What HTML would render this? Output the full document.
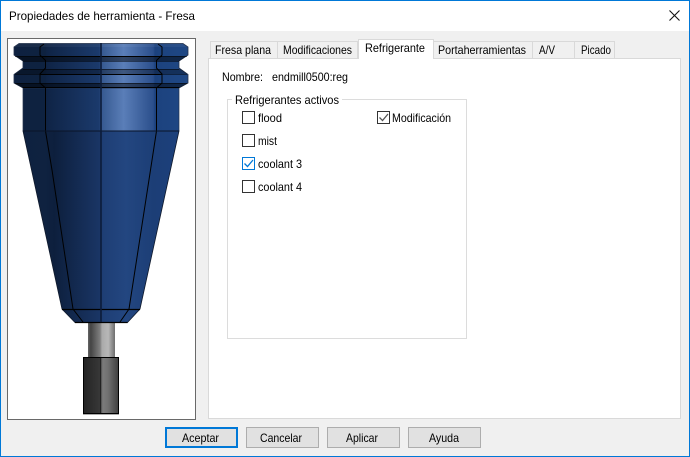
<!DOCTYPE html>
<html><head><meta charset="utf-8"><style>
html,body{margin:0;padding:0;width:690px;height:457px;overflow:hidden;background:#f0f0f0}
svg{display:block}
text{font-family:"Liberation Sans",sans-serif;font-size:12px;fill:#000}
.c{shape-rendering:crispEdges}
</style></head><body>
<svg width="690" height="457" viewBox="0 0 690 457" xmlns="http://www.w3.org/2000/svg">
<defs>
<linearGradient id="g1" gradientUnits="userSpaceOnUse" x1="14" x2="188" y1="0" y2="0">
<stop offset="0" stop-color="#0e2140"/><stop offset=".18" stop-color="#0e2240"/>
<stop offset=".19" stop-color="#0f2446"/><stop offset=".49" stop-color="#1b3a6c"/>
<stop offset=".5" stop-color="#35588f"/><stop offset=".63" stop-color="#5a7eb8"/>
<stop offset=".8" stop-color="#2b4f8c"/><stop offset=".81" stop-color="#1c427e"/>
<stop offset="1" stop-color="#1f4885"/></linearGradient>
<linearGradient id="g2" gradientUnits="userSpaceOnUse" x1="23" x2="179" y1="0" y2="0">
<stop offset="0" stop-color="#0e2140"/><stop offset=".14" stop-color="#0f2240"/>
<stop offset=".2" stop-color="#0d1f3d"/><stop offset=".5" stop-color="#1a3666"/>
<stop offset=".51" stop-color="#1e3e74"/><stop offset=".66" stop-color="#234680"/>
<stop offset=".84" stop-color="#1c3e76"/><stop offset="1" stop-color="#1c407c"/></linearGradient>
<linearGradient id="g3" gradientUnits="userSpaceOnUse" x1="88" x2="115" y1="0" y2="0">
<stop offset="0" stop-color="#666"/><stop offset=".1" stop-color="#444"/><stop offset=".45" stop-color="#808080"/>
<stop offset=".52" stop-color="#aaa"/><stop offset=".75" stop-color="#b8b8b8"/><stop offset="1" stop-color="#6e6e6e"/></linearGradient>
<linearGradient id="g4" gradientUnits="userSpaceOnUse" x1="83" x2="119" y1="0" y2="0">
<stop offset="0" stop-color="#222"/><stop offset=".48" stop-color="#383838"/>
<stop offset=".55" stop-color="#7c7c7c"/><stop offset=".7" stop-color="#707070"/><stop offset="1" stop-color="#3c3c3c"/></linearGradient>
<clipPath id="fl"><path d="M19 43.500H183L188 47V55L179 61V68L188 74.500V83L179 88H23L14 83V74.500L23 68V61L14 55V47Z"/></clipPath>
</defs>

<!-- window -->
<rect class="c" x="0" y="0" width="690" height="457" fill="#0078d7"/>
<rect class="c" x="1" y="1" width="688" height="455" fill="#f0f0f0"/>
<rect class="c" x="1" y="1" width="688" height="30" fill="#fff"/>
<text x="9" y="20" textLength="186" lengthAdjust="spacingAndGlyphs">Propiedades de herramienta - Fresa</text>
<path d="M669.500 10.500L679.500 20.500M679.500 10.500L669.500 20.500" stroke="#111" stroke-width="1.100" fill="none"/>

<!-- image panel -->
<rect class="c" x="7.500" y="38.500" width="188" height="381" fill="#fff" stroke="#696969"/>

<!-- shank -->
<rect x="88" y="322" width="27" height="35" fill="url(#g3)"/>
<rect x="83.500" y="357.500" width="35" height="56" fill="url(#g4)" stroke="#000"/>
<rect class="c" x="100" y="358" width="1" height="55" fill="#222"/>
<rect class="c" x="83" y="414" width="36" height="1" fill="#aaa"/>

<!-- body -->
<path d="M23 131H179L140 309L127.500 322.500H75L62 309Z" fill="url(#g2)" stroke="#101a2c" stroke-width=".8"/>
<rect x="23" y="88" width="156" height="43" fill="url(#g1)"/>
<path d="M23 88V131M179 88V131" stroke="#26344c" stroke-width=".7"/>
<path d="M19 43.500H183L188 47V55L179 61V68L188 74.500V83L179 88H23L14 83V74.500L23 68V61L14 55V47Z" fill="url(#g1)" stroke="#22304a" stroke-width=".8"/>
<g clip-path="url(#fl)">
<rect class="c" x="14" y="44" width="174" height="3" fill="#fff" opacity=".05"/>
<rect class="c" x="14" y="56" width="174" height="5" fill="#000" opacity=".45"/>
<rect class="c" x="14" y="69" width="174" height="5" fill="#000" opacity=".3"/>
<rect class="c" x="14" y="83" width="174" height="5" fill="#000" opacity=".45"/>
</g>

<!-- edges -->
<g fill="none" stroke="#000" stroke-width="1">
<path d="M15 56.500H187M23 61.500H179M23 69.500H179M15 74.500H187M15 83.500H187" stroke-opacity=".5"/>
<path d="M40 56.500H162M40 74.500H162M23 87.500H179" stroke-width="1.100"/>
<path d="M44 44L40 47V55L45.500 60.500V68L40 74V83L45.500 88V131L52 170L73 309L83 322"/>
<path d="M158 44L162 47V55L156.500 60.500V68L162 74V83L156.500 88V131L150.500 170L129 309L120 322"/>
<path d="M23 131H179" stroke="#0a1428"/>
<path d="M62 309.500H140" stroke-width="1.200"/>
<path d="M75 322.500H127.500" stroke-width="1.200"/>
<path d="M101 43V322" stroke="#0c1c3a" stroke-width="1.600"/>
</g>

<!-- tabs -->
<rect class="c" x="208.500" y="58.500" width="472" height="360" fill="#fff" stroke="#d9d9d9"/>
<g class="c" fill="#f0f0f0" stroke="#d9d9d9">
<rect x="210.500" y="41.500" width="67" height="17"/>
<rect x="277.500" y="41.500" width="80" height="17"/>
<rect x="433.500" y="41.500" width="99" height="17"/>
<rect x="532.500" y="41.500" width="42" height="17"/>
<rect x="574.500" y="41.500" width="40" height="17"/>
</g>
<path class="c" d="M358.500 59V39.500H433.500V59" fill="#fff" stroke="#d9d9d9"/>
<rect class="c" x="359" y="58" width="74" height="2" fill="#fff"/>
<text x="215" y="54" textLength="56" lengthAdjust="spacingAndGlyphs">Fresa plana</text>
<text x="283" y="54" textLength="69" lengthAdjust="spacingAndGlyphs">Modificaciones</text>
<text x="365" y="52" textLength="60" lengthAdjust="spacingAndGlyphs">Refrigerante</text>
<text x="438" y="54" textLength="88" lengthAdjust="spacingAndGlyphs">Portaherramientas</text>
<text x="539" y="54" textLength="16" lengthAdjust="spacingAndGlyphs">A/V</text>
<text x="581" y="54" textLength="30" lengthAdjust="spacingAndGlyphs">Picado</text>

<!-- name -->
<text x="222" y="81" textLength="41" lengthAdjust="spacingAndGlyphs">Nombre:</text>
<text x="272" y="81" textLength="76" lengthAdjust="spacingAndGlyphs">endmill0500:reg</text>

<!-- group -->
<rect class="c" x="227.500" y="99.500" width="239" height="239" fill="#fff" stroke="#dcdcdc"/>
<rect class="c" x="232" y="96" width="110" height="8" fill="#fff"/>
<text x="235" y="104" textLength="104" lengthAdjust="spacingAndGlyphs">Refrigerantes activos</text>

<!-- checkboxes -->
<g class="c" fill="#fff" stroke="#333">
<rect x="242.500" y="111.500" width="12" height="12"/>
<rect x="377.500" y="111.500" width="12" height="12"/>
<rect x="242.500" y="134.500" width="12" height="12"/>
<rect x="242.500" y="157.500" width="12" height="12" stroke="#0078d7"/>
<rect x="242.500" y="180.500" width="12" height="12"/>
</g>
<path d="M379.500 117.500L382.500 120.500L388 114" fill="none" stroke="#555" stroke-width="1.300"/>
<path d="M244.500 163.500L247.500 166.500L253 160" fill="none" stroke="#0078d7" stroke-width="1.300"/>
<text x="258" y="122" textLength="24" lengthAdjust="spacingAndGlyphs">flood</text>
<text x="392" y="122" textLength="59" lengthAdjust="spacingAndGlyphs">Modificación</text>
<text x="258" y="145" textLength="19" lengthAdjust="spacingAndGlyphs">mist</text>
<text x="258" y="168" textLength="44" lengthAdjust="spacingAndGlyphs">coolant 3</text>
<text x="258" y="191" textLength="44" lengthAdjust="spacingAndGlyphs">coolant 4</text>

<!-- buttons -->
<rect class="c" x="166" y="428" width="71" height="19" fill="#e1e1e1" stroke="#0078d7" stroke-width="2"/>
<g class="c" fill="#e1e1e1" stroke="#adadad">
<rect x="246.500" y="427.500" width="72" height="20"/>
<rect x="327.500" y="427.500" width="72" height="20"/>
<rect x="408.500" y="427.500" width="72" height="20"/>
</g>
<text x="182" y="442" textLength="37" lengthAdjust="spacingAndGlyphs">Aceptar</text>
<text x="260" y="442" textLength="42" lengthAdjust="spacingAndGlyphs">Cancelar</text>
<text x="346" y="442" textLength="32" lengthAdjust="spacingAndGlyphs">Aplicar</text>
<text x="429" y="442" textLength="30" lengthAdjust="spacingAndGlyphs">Ayuda</text>
</svg>
</body></html>
